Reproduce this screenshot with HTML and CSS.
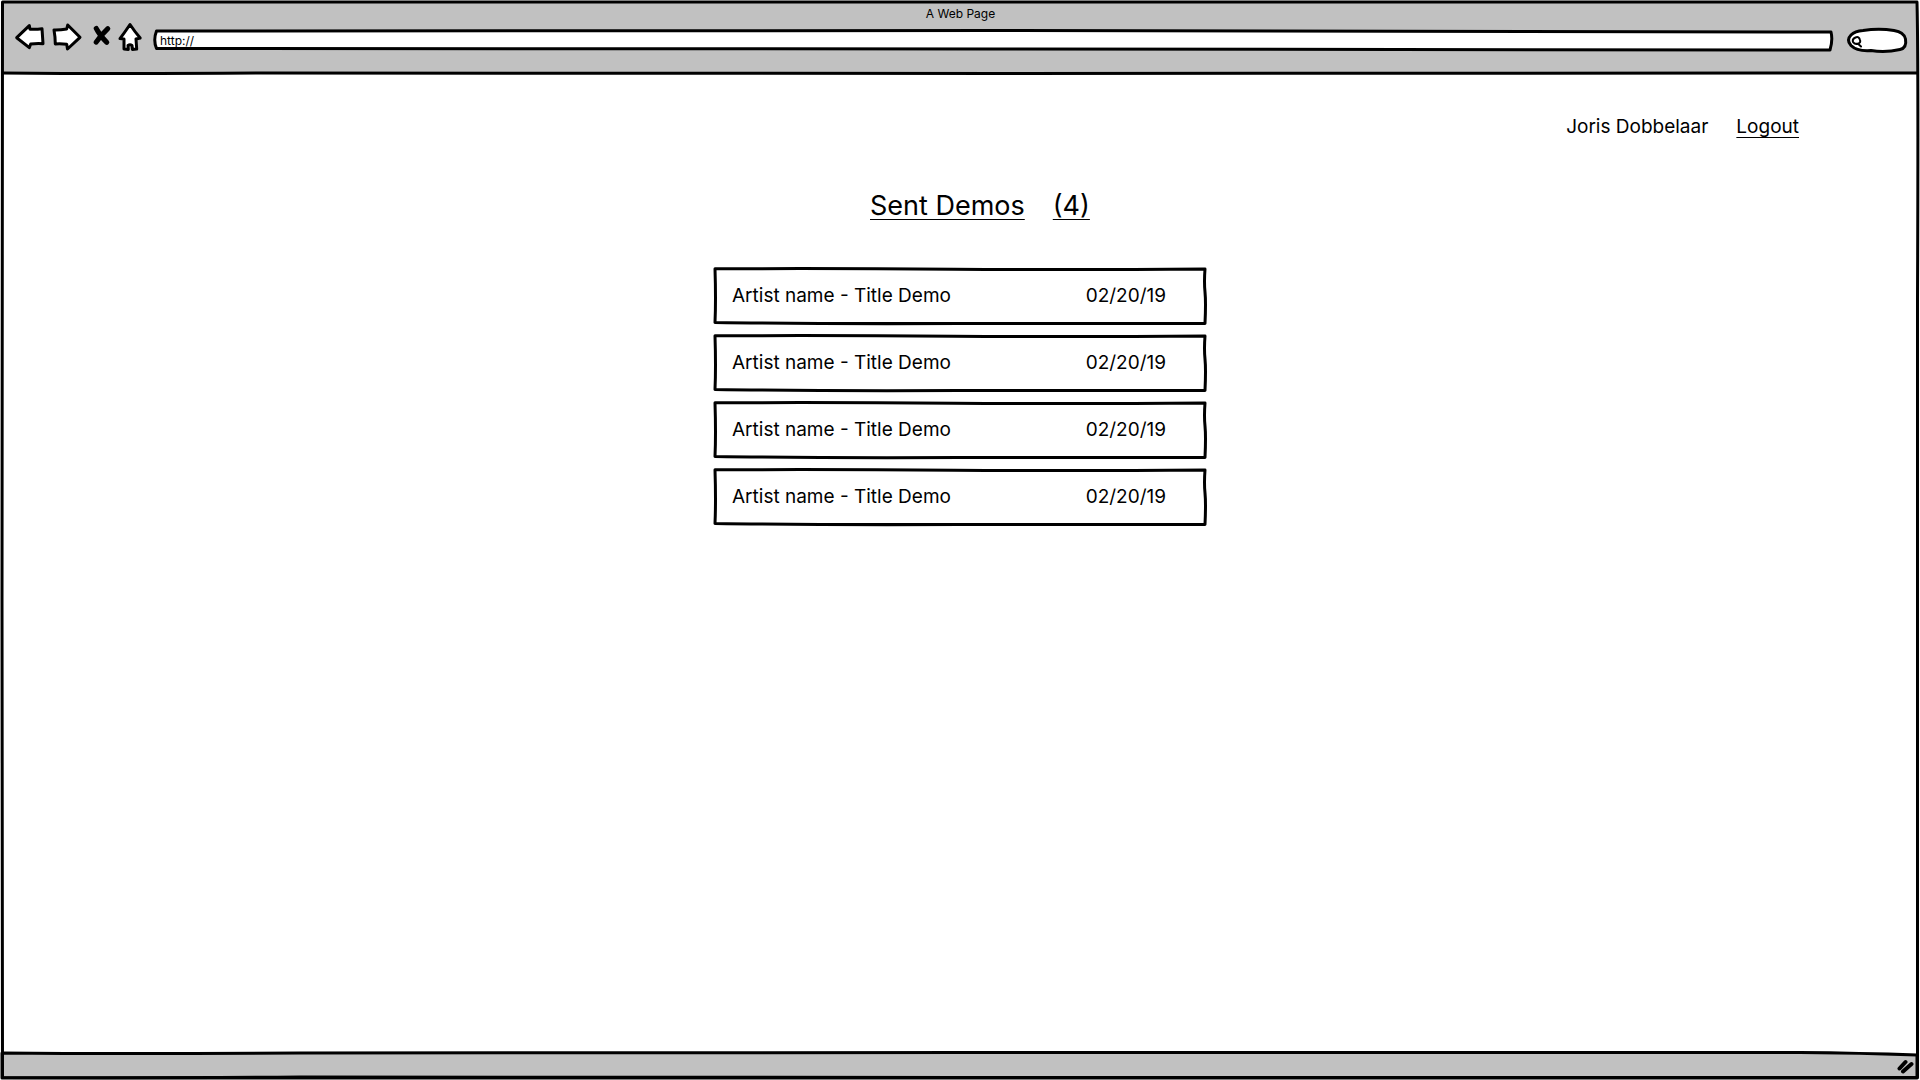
FILE: index.html
```html
<!DOCTYPE html>
<html lang="en">
<head>
<meta charset="utf-8">
<title>A Web Page</title>
<link rel="stylesheet" href="styles.css">
</head>
<body>
<div class="browser">
  <header class="chrome">
    <div class="chrome-title">A Web Page</div>
    <div class="toolbar">
      <div class="tools">
        <button class="tool" type="button" aria-label="Back"><svg class="icon" width="32" height="32" viewBox="0 0 32 32"><path d="M2.700 13.700 15.300 1.600 16 5.200Q22 5.600 28 4.700L29 19.700Q22 19.400 16.700 20L15.300 23.600Z"/></svg></button>
        <button class="tool" type="button" aria-label="Forward"><svg class="icon" width="32" height="32" viewBox="0 0 32 32"><path d="M4 6Q10 6.200 16.700 5L17.700 1 30 13.300 17.500 25 16.700 20.300Q11 19.600 5.300 20Q5.300 13 4 6Z"/></svg></button>
        <button class="tool" type="button" aria-label="Stop"><svg class="icon" width="28" height="32" viewBox="0 0 28 32"><path class="cross" d="M10.200 4.400Q14 12 20.800 18.400M21.800 4.600Q15 11 10.200 18.200"/></svg></button>
        <button class="tool" type="button" aria-label="Home"><svg class="icon" width="24" height="32" viewBox="0 0 24 32"><path d="M12 .5Q17 8 22.200 14L18 15 18.700 25 14.400 25.400 14 21.500Q12 20 10 21.500L10.300 25.400 6 25 6 15 2 14.600Q7 8 12 .5Z"/></svg></button>
      </div>
      <div class="address">
        <svg class="sketch" viewBox="0 0 1678 20" preserveAspectRatio="none" aria-hidden="true"><path class="paper" d="M2.500 1Q400 1.500 840 .5T1677 2Q1679 10 1676 20Q1200 19.500 840 19T2.500 18.500Q-1 10 2.500 1Z"/></svg>
        <input class="address-input" type="text" value="http://" aria-label="Address">
      </div>
      <div class="search">
        <svg class="sketch" viewBox="0 0 60 24" preserveAspectRatio="none" aria-hidden="true"><path class="paper" d="M16 2.500Q32 0 47 2.500Q57 4 58.500 11Q60 20 53 21.500Q38 25 24 22.500Q10 23.500 4 17.500Q-1 12 4 7Q8 3 16 2.500Z"/></svg>
        <svg class="lens" width="12" height="14" viewBox="0 0 12 14" aria-hidden="true"><path d="M9 5Q8 1 4.500 2.500Q1 4 2 7Q3.500 9.500 6.500 8.800Q10 8 9 5ZM4 8.800 7 8.800 10 11.500"/></svg>
        <input class="search-input" type="search" aria-label="Search">
      </div>
    </div>
    <svg class="rule" viewBox="0 0 1920 6" preserveAspectRatio="none" aria-hidden="true"><path d="M0 3Q120 4 260 3T1000 3.500T1920 3"/></svg>
  </header>

  <main class="page">
    <nav class="account">
      <span>Joris Dobbelaar</span>
      <a class="link" href="#logout">Logout</a>
    </nav>
    <section class="demos">
      <h1 class="demos-title"><a class="link" href="#sent">Sent Demos</a><a class="link" href="#sent">(4)</a></h1>
      <ul class="demo-list">
        <li class="demo"><svg class="sketch" viewBox="0 0 492 56" preserveAspectRatio="none" aria-hidden="true"><path d="M1 .8Q120 .3 240 1.200T491 1Q490 14 491 24T491 55.500Q400 55 246 55.500T1 54.500Q2 32 1 .8Z"/></svg><span>Artist name - Title Demo</span><time datetime="2019-02-20">02/20/19</time></li>
        <li class="demo"><svg class="sketch" viewBox="0 0 492 56" preserveAspectRatio="none" aria-hidden="true"><path d="M1 .8Q120 .3 240 1.200T491 1Q490 14 491 24T491 55.500Q400 55 246 55.500T1 54.500Q2 32 1 .8Z"/></svg><span>Artist name - Title Demo</span><time datetime="2019-02-20">02/20/19</time></li>
        <li class="demo"><svg class="sketch" viewBox="0 0 492 56" preserveAspectRatio="none" aria-hidden="true"><path d="M1 .8Q120 .3 240 1.200T491 1Q490 14 491 24T491 55.500Q400 55 246 55.500T1 54.500Q2 32 1 .8Z"/></svg><span>Artist name - Title Demo</span><time datetime="2019-02-20">02/20/19</time></li>
        <li class="demo"><svg class="sketch" viewBox="0 0 492 56" preserveAspectRatio="none" aria-hidden="true"><path d="M1 .8Q120 .3 240 1.200T491 1Q490 14 491 24T491 55.500Q400 55 246 55.500T1 54.500Q2 32 1 .8Z"/></svg><span>Artist name - Title Demo</span><time datetime="2019-02-20">02/20/19</time></li>
      </ul>
    </section>
  </main>

  <footer class="status">
    <svg class="sketch" viewBox="0 0 1920 28" preserveAspectRatio="none" aria-hidden="true"><path class="metal" d="M2 2Q120 3 300 2T960 1.500T1800 1.500Q1860 2 1917 4V27H2Z"/></svg>
    <svg class="grip" width="18" height="16" viewBox="0 0 18 16" aria-hidden="true"><path d="M2.500 9.500 8.500 3M6 12.500 14.500 5"/></svg>
  </footer>
  <svg class="sketch" viewBox="0 0 1920 1080" preserveAspectRatio="none" aria-hidden="true"><path d="M2.500 2H1917Q1918.500 60 1917.500 300T1917.500 1077.500Q1300 1078 960 1077.500T300 1077Q160 1078 2.500 1077.500Q3 900 2 600T2.500 2Z"/></svg>
</div>
</body>
</html>
```

FILE: styles.css
```css
* { box-sizing: border-box; }

body {
  margin: 0;
  background: #fff;
  color: #000;
  font-family: Inter, "Liberation Sans", sans-serif;
  font-size: 19px;
  line-height: 24px;
}

.browser {
  position: relative;
  display: flex;
  flex-direction: column;
  min-height: 100vh;
}

/* hand-drawn outlines stretch over their box */
.sketch {
  position: absolute;
  inset: 0;
  width: 100%;
  height: 100%;
  overflow: visible;
  pointer-events: none;
}

.sketch path,
.rule path {
  fill: none;
  stroke: #000;
  stroke-width: 3px;
  stroke-linejoin: round;
  vector-effect: non-scaling-stroke;
}

.sketch .paper { fill: #fff; }
.sketch .metal { fill: #c1c1c1; }

.chrome {
  position: relative;
  margin: 1px 2px 0;
  padding: 1px 11px 17px 12px;
  background: #c1c1c1;
}

.chrome-title {
  height: 22px;
  text-align: center;
  font-size: 12px;
  line-height: 24px;
}

.toolbar {
  display: flex;
  align-items: center;
  gap: 12px;
}

.tools {
  display: flex;
  gap: 4px;
}

.tool {
  display: block;
  padding: 0;
  border: 0;
  background: none;
}

.icon {
  display: block;
  fill: #fff;
  stroke: #000;
  stroke-width: 3px;
  stroke-linejoin: round;
  overflow: visible;
}

.icon .cross {
  fill: none;
  stroke-width: 5px;
  stroke-linecap: round;
}

.address {
  position: relative;
  flex: 1;
  height: 20px;
}

.address-input,
.search-input {
  position: relative;
  display: block;
  width: 100%;
  height: 100%;
  padding: 0 6px;
  border: 0;
  outline: 0;
  background: none;
  color: #000;
  font: 12px Inter, "Liberation Sans", sans-serif;
}

.search {
  position: relative;
  width: 60px;
  height: 24px;
  margin-left: 3px;
}

.search-input { padding-left: 18px; }

.lens {
  position: absolute;
  left: 4px;
  top: 7px;
  fill: none;
  stroke: #000;
  stroke-width: 2px;
  stroke-linecap: round;
}

.rule {
  position: absolute;
  left: 0;
  bottom: -3px;
  width: 100%;
  height: 6px;
  overflow: visible;
}

.page {
  flex: 1;
  padding: 42px 24px 40px;
}

.account {
  display: flex;
  justify-content: flex-end;
  gap: 28px;
  padding-right: 97px;
}

.link {
  color: inherit;
  text-decoration: underline 1px;
  text-decoration-skip-ink: none;
  text-underline-offset: 4px;
}

.demos {
  width: 492px;
  max-width: 100%;
  margin: 49px auto 0;
}

.demos-title {
  display: flex;
  gap: 28px;
  margin: 0 0 44px;
  padding-left: 156px;
  font-size: 27px;
  font-weight: 400;
  line-height: 36px;
  white-space: nowrap;
}

.demo-list {
  display: grid;
  gap: 11px;
  margin: 0;
  padding: 0;
  list-style: none;
}

.demo {
  position: relative;
  display: flex;
  align-items: center;
  justify-content: space-between;
  height: 56px;
  padding: 0 40px 0 18px;
}

.status {
  position: relative;
  display: flex;
  align-items: center;
  justify-content: flex-end;
  height: 28px;
  padding: 3px 5px 0;
  margin-bottom: 1px;
}

.grip {
  position: relative;
  fill: none;
  stroke: #000;
  stroke-width: 4px;
  stroke-linecap: round;
}
```
